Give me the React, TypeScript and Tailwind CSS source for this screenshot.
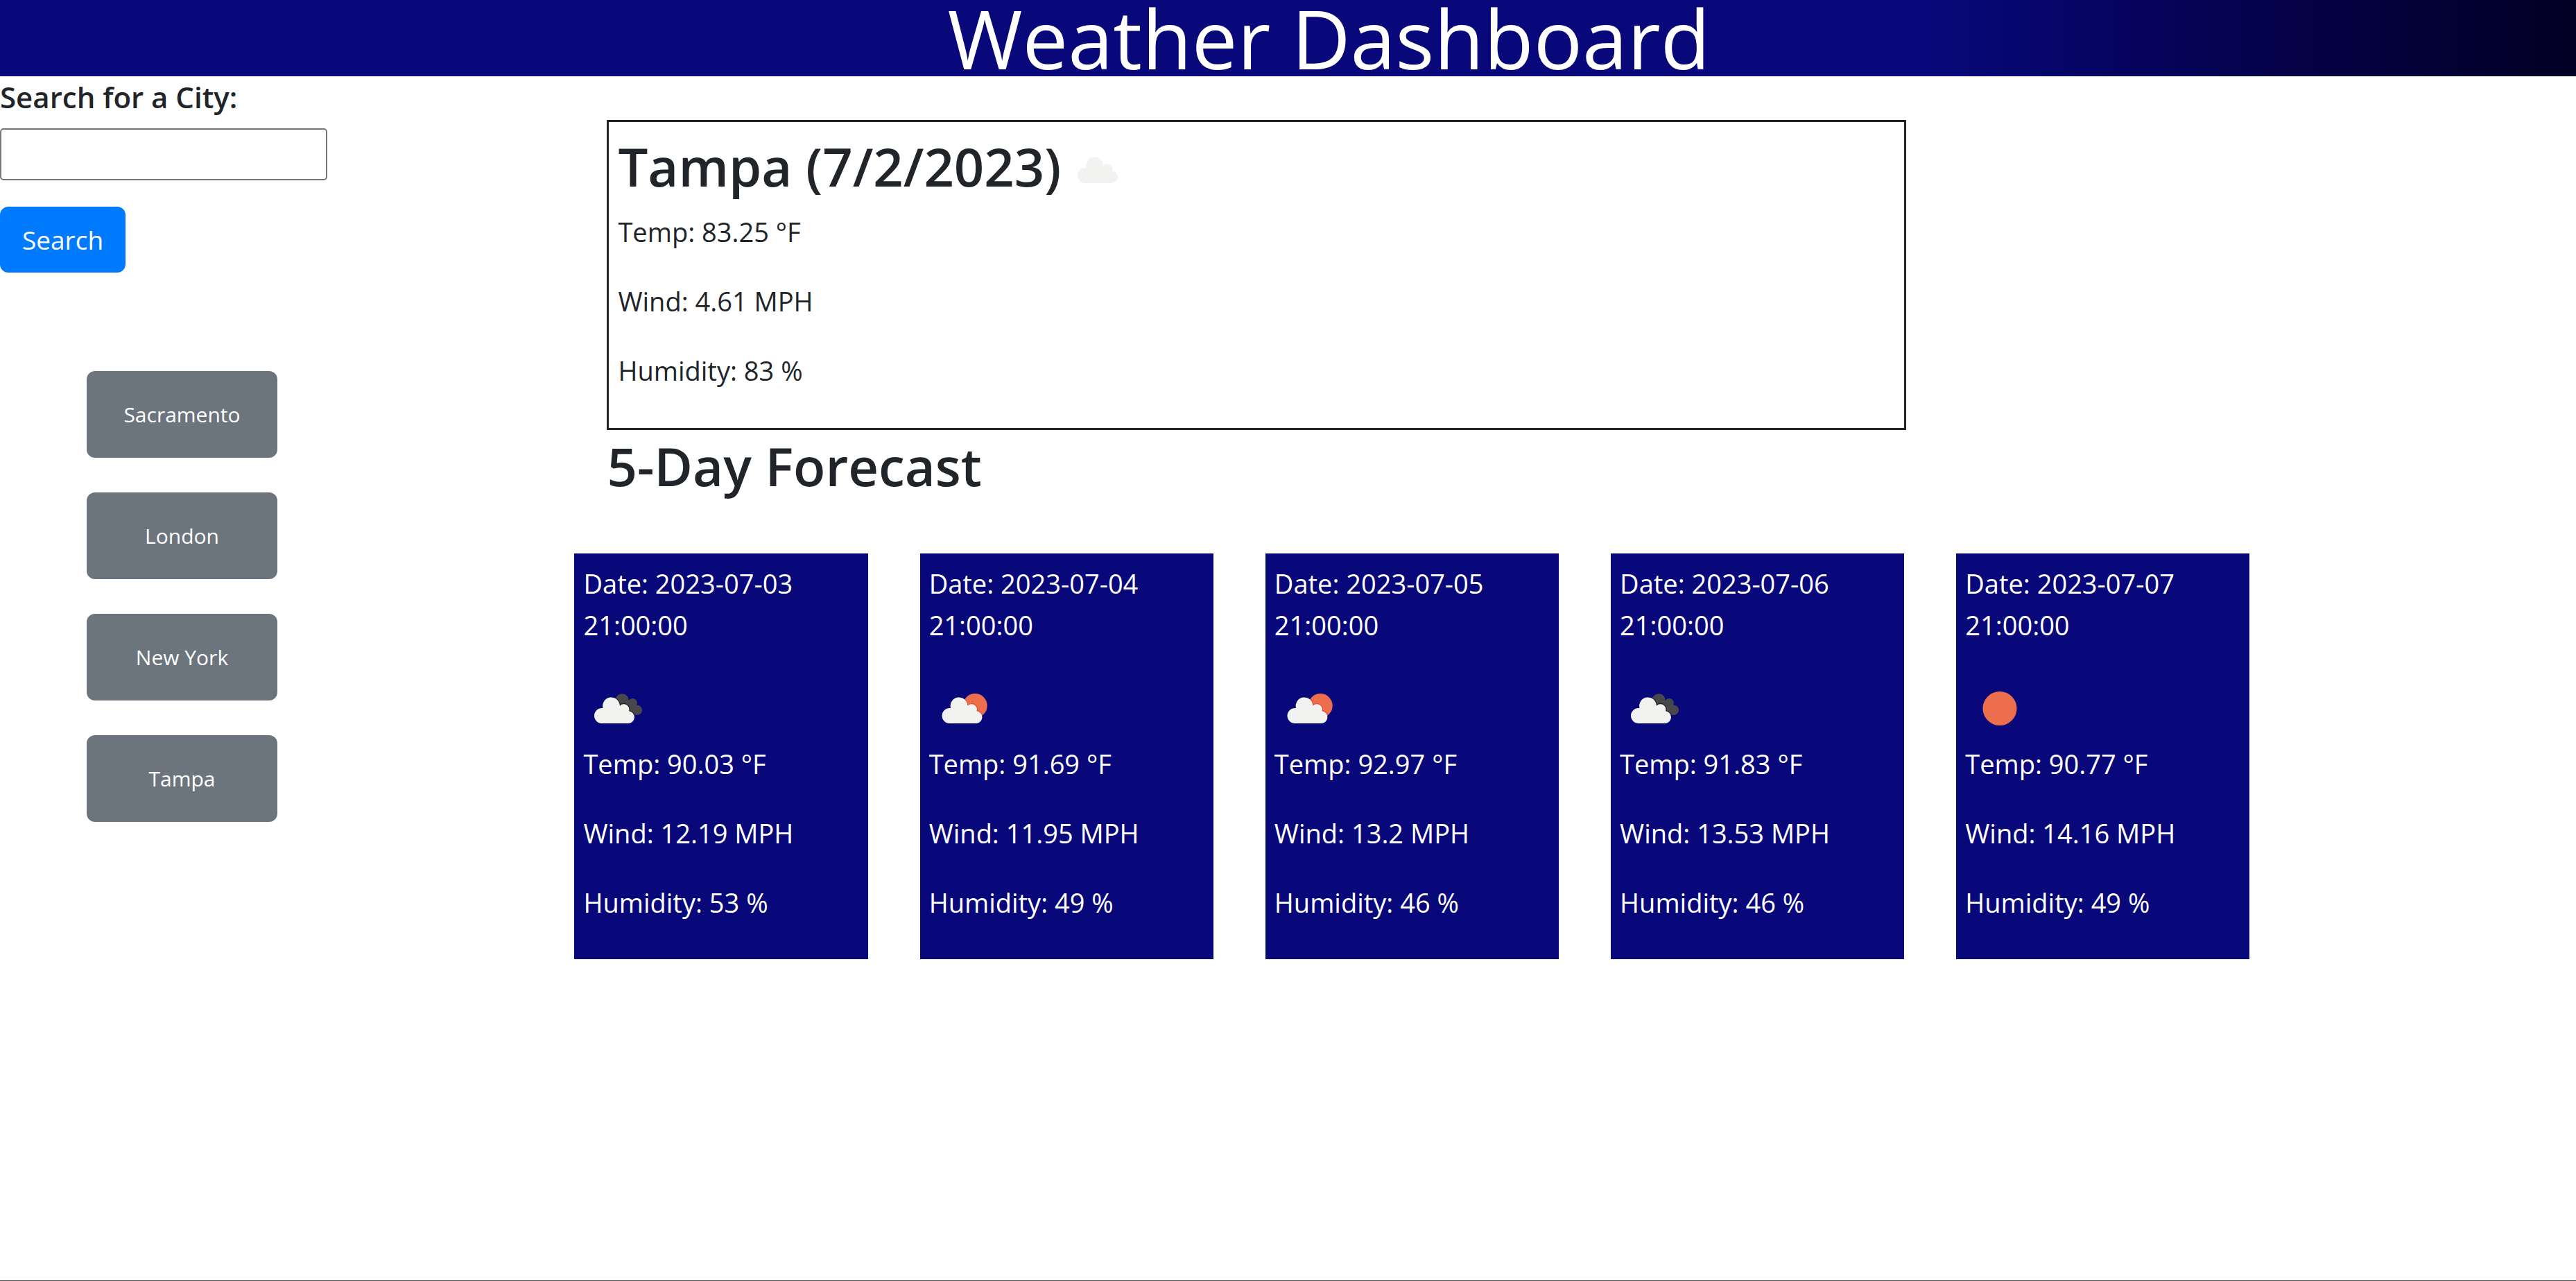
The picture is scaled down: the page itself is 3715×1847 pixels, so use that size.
import { useState } from "react";

type Sky = "clouds" | "broken" | "few" | "clear";

type Reading = { temp: string; wind: string; humidity: string };

const cities = ["Sacramento", "London", "New York", "Tampa"];

const today: Reading = { temp: "83.25", wind: "4.61", humidity: "83" };

const forecast: (Reading & { date: string; sky: Sky })[] = [
  { date: "2023-07-03 21:00:00", sky: "broken", temp: "90.03", wind: "12.19", humidity: "53" },
  { date: "2023-07-04 21:00:00", sky: "few", temp: "91.69", wind: "11.95", humidity: "49" },
  { date: "2023-07-05 21:00:00", sky: "few", temp: "92.97", wind: "13.2", humidity: "46" },
  { date: "2023-07-06 21:00:00", sky: "broken", temp: "91.83", wind: "13.53", humidity: "46" },
  { date: "2023-07-07 21:00:00", sky: "clear", temp: "90.77", wind: "14.16", humidity: "49" },
];

const cloudPath =
  "M27 72 A11 11 0 0 1 27 50 L28.5 50 A12.4 12.4 0 1 1 52.9 46.8 A7.7 7.7 0 0 1 66 54.3 A8.9 8.9 0 0 1 66 72 Z";
const backCloudPath =
  "M46.5 38.5 A9.6 9.6 0 0 1 65.7 39.2 A6.4 6.4 0 0 1 77 45.7 A7.2 7.2 0 1 1 75 59.5 L60 62 L48 52 Z";

function SkyIcon({ sky, label }: { sky: Sky; label: string }) {
  return (
    <svg viewBox="0 0 100 100" role="img" aria-label={label} className="size-[100px] shrink-0">
      <defs>
        <clipPath id="back-cloud">
          <path d={backCloudPath} />
        </clipPath>
        <clipPath id="back-sun">
          <circle cx="66.2" cy="46.5" r="17.5" />
        </clipPath>
      </defs>
      {sky === "clear" && <circle cx="50" cy="50.5" r="24.5" fill="#ec6e4c" />}
      {sky === "clouds" && <path d={cloudPath} fill="#f2f2f0" />}
      {sky === "broken" && (
        <>
          <path d={backCloudPath} fill="#48484a" />
          <g clipPath="url(#back-cloud)">
            <path d={cloudPath} fill="none" stroke="#222224" strokeWidth="2.4" />
          </g>
          <path d={cloudPath} fill="#f2f2f0" />
        </>
      )}
      {sky === "few" && (
        <>
          <circle cx="66.2" cy="46.5" r="17.5" fill="#ec6e4c" />
          <g clipPath="url(#back-sun)">
            <path d={cloudPath} transform="translate(2.5 0)" fill="none" stroke="#e2512c" strokeWidth="2.4" />
          </g>
          <path d={cloudPath} transform="translate(2.5 0)" fill="#f2f2f0" />
        </>
      )}
    </svg>
  );
}

function Readings({ temp, wind, humidity }: Reading) {
  return (
    <>
      <p className="mb-10">{`Temp: ${temp} °F`}</p>
      <p className="mb-10">{`Wind: ${wind} MPH`}</p>
      <p className="mb-10">{`Humidity: ${humidity} %`}</p>
    </>
  );
}

export default function App() {
  const [query, setQuery] = useState("");

  return (
    <div className="flex min-h-screen flex-col border-b border-[#4d4d4d] bg-white font-['Open_Sans','Noto_Sans',sans-serif] text-[38px] leading-[60px] text-[#212529]">
      <header className="bg-linear-to-r from-[#08087a] from-75% to-[#020024] pl-[118px]">
        <h1 className="text-center text-[117px] leading-[110px] text-white">Weather Dashboard</h1>
      </header>

      <div className="flex">
        <aside className="w-[22.3%] shrink-0">
          <form onSubmit={(e) => e.preventDefault()}>
            <label htmlFor="city" className="mb-5 block pt-1 text-[42px] leading-[51px] font-semibold">
              Search for a City:
            </label>
            <input
              id="city"
              type="text"
              value={query}
              onChange={(e) => setQuery(e.target.value)}
              className="block h-[75px] w-[57%] rounded-[5px] border-2 border-[#767676] bg-white px-2"
            />
            <button
              type="submit"
              className="mt-[38px] block h-[95px] rounded-xl bg-[#007bff] px-8 text-[37px] text-white"
            >
              Search
            </button>
          </form>
          <nav aria-label="Recent cities" className="mt-[142px] ml-[125px] flex w-[275px] flex-col gap-[50px]">
            {cities.map((city) => (
              <button
                key={city}
                type="button"
                className="h-[125px] rounded-xl bg-[#6c757d] text-[30px] text-white"
              >
                {city}
              </button>
            ))}
          </nav>
        </aside>

        <main className="min-w-0 grow">
          <section className="mt-[63px] ml-[47px] w-[64.9%] border-3 border-[#212529] px-[13px] pt-3 pb-[13px]">
            <h2 className="mb-5 flex h-24 items-start gap-2 pt-2 text-[76px] leading-[88px] font-semibold">
              Tampa (7/2/2023)
              <span className="-mt-1">
                <SkyIcon sky="clouds" label="Overcast" />
              </span>
            </h2>
            <Readings {...today} />
          </section>

          <h2 className="mb-[82px] ml-[47px] pt-2 text-[76px] leading-[88px] font-semibold">5-Day Forecast</h2>

          <section aria-label="5-Day Forecast" className="grid w-[83.7%] grid-cols-5 gap-[75px]">
            {forecast.map(({ date, sky, ...reading }) => (
              <article key={date} className="bg-[#08087a] p-[13px] pb-3 text-white">
                <p className="mb-10">{`Date: ${date}`}</p>
                <SkyIcon sky={sky} label={sky} />
                <Readings {...reading} />
              </article>
            ))}
          </section>
        </main>
      </div>
    </div>
  );
}
